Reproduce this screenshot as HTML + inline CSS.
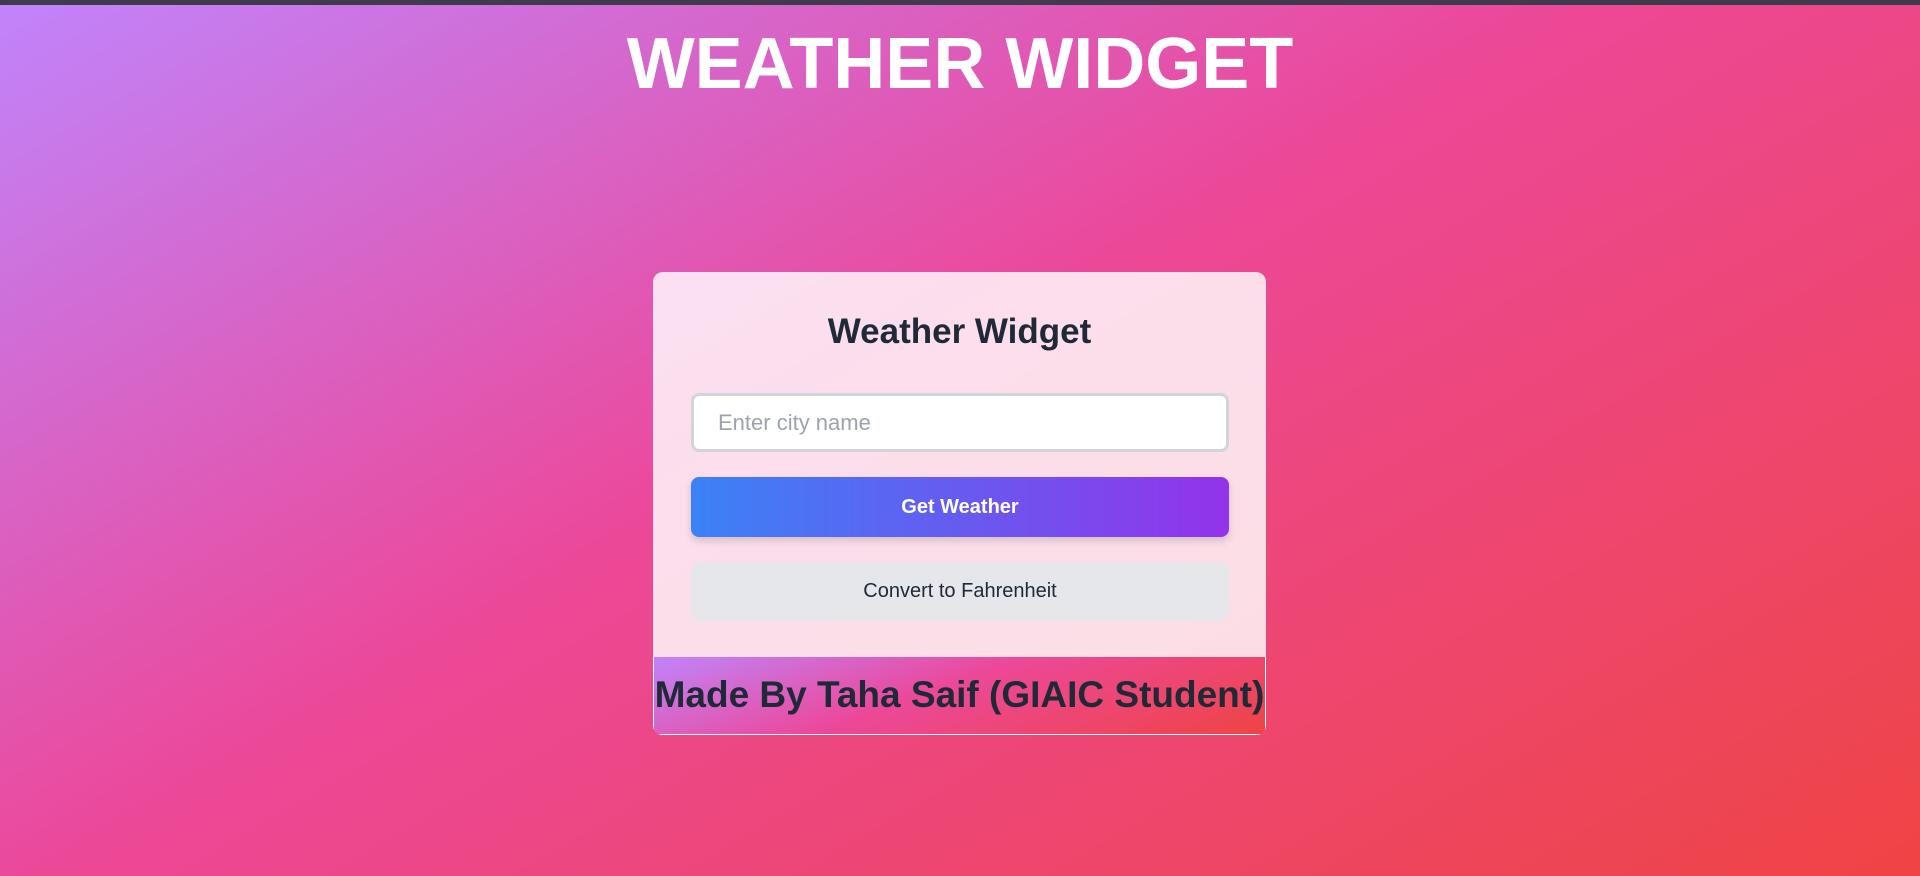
<!DOCTYPE html>
<html><head><meta charset="utf-8"><style>
*{box-sizing:border-box;margin:0;padding:0}
html,body{width:1920px;height:876px;overflow:hidden}
body{font-family:"Liberation Sans",sans-serif;background:linear-gradient(150deg,#c084fc 0%,#ec4899 45%,#ef4444 100%);position:relative}
.bar{position:absolute;left:0;top:0;width:1920px;height:5px;background:#3f3b4d}
.title{position:absolute;left:0;width:1920px;top:26px;text-align:center;color:#fff;font-weight:bold;font-size:72px;line-height:76px}
.card{position:absolute;left:653px;top:272px;width:613px;height:463px;border-radius:10px;background:rgba(255,255,255,0.82);overflow:hidden}
.h{position:absolute;top:40px;width:100%;text-align:center;font-weight:bold;font-size:35px;color:#1f2937}
.inp{position:absolute;left:38px;top:121px;width:538px;height:59px;background:#fff;border:3px solid #d1d5db;border-radius:8px;font-size:22px;color:#9ca3af;padding-left:24px;line-height:53px}
.btn{position:absolute;left:38px;top:205px;width:538px;height:60px;border-radius:8px;background:linear-gradient(90deg,#3b82f6,#9333ea);color:#fff;font-weight:bold;font-size:20px;text-align:center;line-height:60px;box-shadow:0 4px 8px rgba(0,0,0,0.15)}
.cv{position:absolute;left:38px;top:290px;width:538px;height:59px;border-radius:8px;background:#e5e7eb;color:#1f2937;font-size:20px;text-align:center;line-height:59px}
.ft{position:absolute;left:0;top:385px;width:613px;height:78px;background:linear-gradient(160deg,#c084fc 0%,#ec4899 45%,#ef4444 100%);border:1px solid #fff;border-top:none;color:#1f2937;font-weight:bold;font-size:37px;line-height:76px;white-space:nowrap;text-align:center;overflow:hidden}
</style></head><body>
<div class="bar"></div>
<div class="title">WEATHER WIDGET</div>
<div class="card">
<div class="h">Weather Widget</div>
<div class="inp">Enter city name</div>
<div class="btn">Get Weather</div>
<div class="cv">Convert to Fahrenheit</div>
<div class="ft">Made By Taha Saif (GIAIC Student)</div>
</div>
</body></html>
